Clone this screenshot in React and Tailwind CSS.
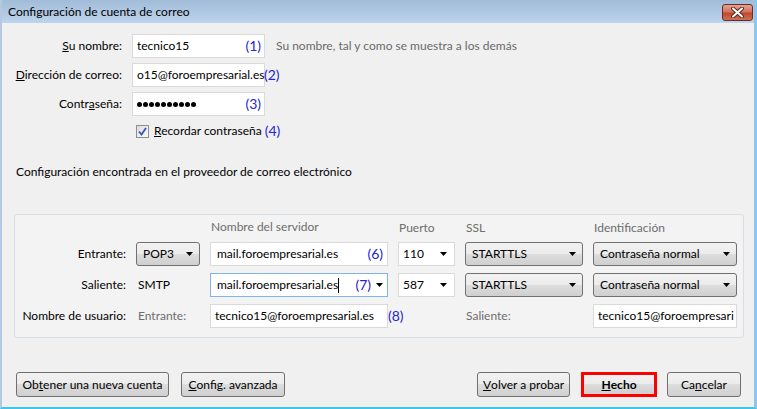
import React from "react";

function Arrow() {
  return (
    <svg width="7" height="4" viewBox="0 0 7 4" className="shrink-0">
      <path d="M0 0H7L3.5 4Z" fill="#000" />
    </svg>
  );
}

function Num({ children }) {
  return <span className="text-[14px] text-[#2424d8] leading-none">{children}</span>;
}

function Button({ children, className = "" }) {
  return (
    <div
      className={`h-[25px] flex items-center justify-center border border-[#707070] rounded-[3px] bg-[linear-gradient(#f2f2f2,#ebebeb_50%,#dddddd_50%,#cfcfcf)] text-[12px] text-black ${className}`}
    >
      {children}
    </div>
  );
}

function Select({ className = "", children }) {
  return (
    <div
      className={`h-[24px] flex items-center justify-between pl-[6px] pr-[6px] border border-[#707070] rounded-[3px] bg-[linear-gradient(#f2f2f2,#ebebeb_50%,#dddddd_50%,#cfcfcf)] ${className}`}
    >
      <span>{children}</span>
      <Arrow />
    </div>
  );
}

export default function App() {
  return (
    <div className="w-[757px] h-[409px] bg-[#f0f0f0] font-['Lato',sans-serif] text-[12px] text-black flex flex-col overflow-hidden border-l-2 border-r-[3px] border-b-2 border-l-[#b4c9e0] border-r-[#8fc4ec] border-b-[#3cc8ee] leading-none">
      {/* title bar */}
      <div className="h-[23px] shrink-0 flex items-start justify-between bg-[linear-gradient(#a2bbd8,#bcd4ec)] -mr-[3px] -ml-[2px] pl-[8px] rounded-t-[4px]">
        <span className="mt-[6px] text-[12px] text-black">Configuración de cuenta de correo</span>
        <div className="mt-[4px] mr-[4px] w-[31px] h-[17px] rounded-[3px] border border-[#6c2a22] bg-[linear-gradient(#e4a392,#d3735e_45%,#c2462e_55%,#cf7056)] flex items-center justify-center">
          <svg width="13" height="11" viewBox="0 0 13 11">
            <path d="M2 1.5L11 9.5M11 1.5L2 9.5" stroke="#5a2a24" strokeWidth="4" strokeLinecap="round" />
            <path d="M2 1.5L11 9.5M11 1.5L2 9.5" stroke="#fff" strokeWidth="2" strokeLinecap="round" />
          </svg>
        </div>
      </div>

      {/* top form */}
      <div className="mt-[11px] flex flex-col gap-[5px]">
        <div className="h-[24px] flex items-center">
          <div className="w-[120px] text-right">
            <u>S</u>u nombre:
          </div>
          <div className="ml-[10px] w-[133px] h-[24px] bg-white border border-[#dadada] flex items-center justify-between pl-[4px] pr-[3px]">
            <span>tecnico15</span>
            <Num>(1)</Num>
          </div>
          <span className="ml-[11px] text-[#6a6a6a]">Su nombre, tal y como se muestra a los demás</span>
        </div>
        <div className="h-[24px] flex items-center">
          <div className="w-[120px] text-right">
            <u>D</u>irección de correo:
          </div>
          <div className="ml-[10px] w-[133px] h-[24px] bg-white border border-[#dadada] flex items-center pl-[4px] overflow-visible whitespace-nowrap">
            <span>o15@foroempresarial.es</span>
          </div>
          <span className="-ml-[1px]">
            <Num>(2)</Num>
          </span>
        </div>
        <div className="h-[24px] flex items-center">
          <div className="w-[120px] text-right">
            Contr<u>a</u>seña:
          </div>
          <div className="ml-[10px] w-[133px] h-[24px] bg-white border border-[#dadada] flex items-center justify-between pl-[4px] pr-[3px]">
            <span className="flex gap-[1px]">
              {Array.from({ length: 10 }).map((_, i) => (
                <span key={i} className="w-[5px] h-[5px] rounded-full bg-black" />
              ))}
            </span>
            <Num>(3)</Num>
          </div>
        </div>
      </div>

      <div className="mt-[5px] h-[20px] flex items-center pl-[134px]">
        <div className="w-[13px] h-[13px] border border-[#8e8f8f] bg-[linear-gradient(135deg,#dcdcdc,#fbfbfb)] flex items-center justify-center">
          <svg width="9" height="9" viewBox="0 0 9 9">
            <path d="M1 4.5L3.5 7.5L8 1" stroke="#3a55b0" strokeWidth="1.8" fill="none" />
          </svg>
        </div>
        <span className="ml-[5px]">
          <u>R</u>ecordar contraseña
        </span>
        <span className="ml-[3px]">
          <Num>(4)</Num>
        </span>
      </div>

      <div className="mt-[23px] h-[16px] flex items-center pl-[14px]">
        Configuración encontrada en el proveedor de correo electrónico
      </div>

      {/* group box */}
      <div className="mt-[34px] ml-[12px] w-[730px] border border-[#d5dfe5] rounded-[3px] bg-[#f3f3f3] pt-[6px] pb-[9px]">
        <div className="grid grid-cols-[111px_64px_178px_57px_118px_144px] gap-x-[10px] gap-y-[7px] items-center">
          <div />
          <div />
          <div className="text-[#6d6d6d] pl-[1px] h-[14px]">Nombre del servidor</div>
          <div className="text-[#6d6d6d] pl-[1px]">Puerto</div>
          <div className="text-[#6d6d6d] pl-[1px]">SSL</div>
          <div className="text-[#6d6d6d] pl-[1px]">Identificación</div>

          <div className="text-right">Entrante:</div>
          <Select className="w-[64px]">POP3</Select>
          <div className="h-[24px] bg-white border border-[#dadada] flex items-center justify-between pl-[6px] pr-[4px]">
            <span>mail.foroempresarial.es</span>
            <Num>(6)</Num>
          </div>
          <div className="h-[24px] bg-white border border-[#dadada] flex items-center justify-between pl-[4px] pr-[7px]">
            <span>110</span>
            <Arrow />
          </div>
          <Select>STARTTLS</Select>
          <Select>Contraseña normal</Select>

          <div className="text-right">Saliente:</div>
          <div className="pl-[2px]">SMTP</div>
          <div className="h-[24px] bg-white border border-[#7eb4ea] flex items-center pl-[6px] pr-[4px]">
            <span>mail.foroempresarial.es</span>
            <span className="w-[1px] h-[15px] bg-black" />
            <span className="ml-auto mr-[5px]">
              <Num>(7)</Num>
            </span>
            <Arrow />
          </div>
          <div className="h-[24px] bg-white border border-[#dadada] flex items-center justify-between pl-[4px] pr-[7px]">
            <span>587</span>
            <Arrow />
          </div>
          <Select>STARTTLS</Select>
          <Select>Contraseña normal</Select>

          <div className="text-right whitespace-nowrap">Nombre de usuario:</div>
          <div className="text-[#6d6d6d] pl-[2px]">Entrante:</div>
          <div className="flex items-center">
            <div className="w-[178px] shrink-0 h-[24px] bg-white border border-[#dadada] flex items-center pl-[4px]">
              <span>tecnico15@foroempresarial.es</span>
            </div>
            <span className="shrink-0">
              <Num>(8)</Num>
            </span>
          </div>
          <div />
          <div className="text-[#6d6d6d] pl-[1px]">Saliente:</div>
          <div className="h-[24px] bg-white border border-[#dadada] flex items-center pl-[4px] whitespace-nowrap">
            <span>tecnico15@foroempresari</span>
          </div>
        </div>
      </div>

      {/* bottom buttons */}
      <div className="mt-[34px] flex items-center pl-[14px] pr-[13px]">
        <Button className="w-[153px]">
          Ob<u>t</u>ener una nueva cuenta
        </Button>
        <Button className="ml-[12px] w-[104px]">
          <u>C</u>onfig. avanzada
        </Button>
        <Button className="ml-auto w-[93px]">
          <u>V</u>olver a probar
        </Button>
        <Button className="ml-[11px] w-[76px] !border-[3px] !border-[#ff0000] !rounded-none font-bold">
          <u>H</u>echo
        </Button>
        <Button className="ml-[10px] w-[74px]">
          Ca<u>n</u>celar
        </Button>
      </div>
    </div>
  );
}
